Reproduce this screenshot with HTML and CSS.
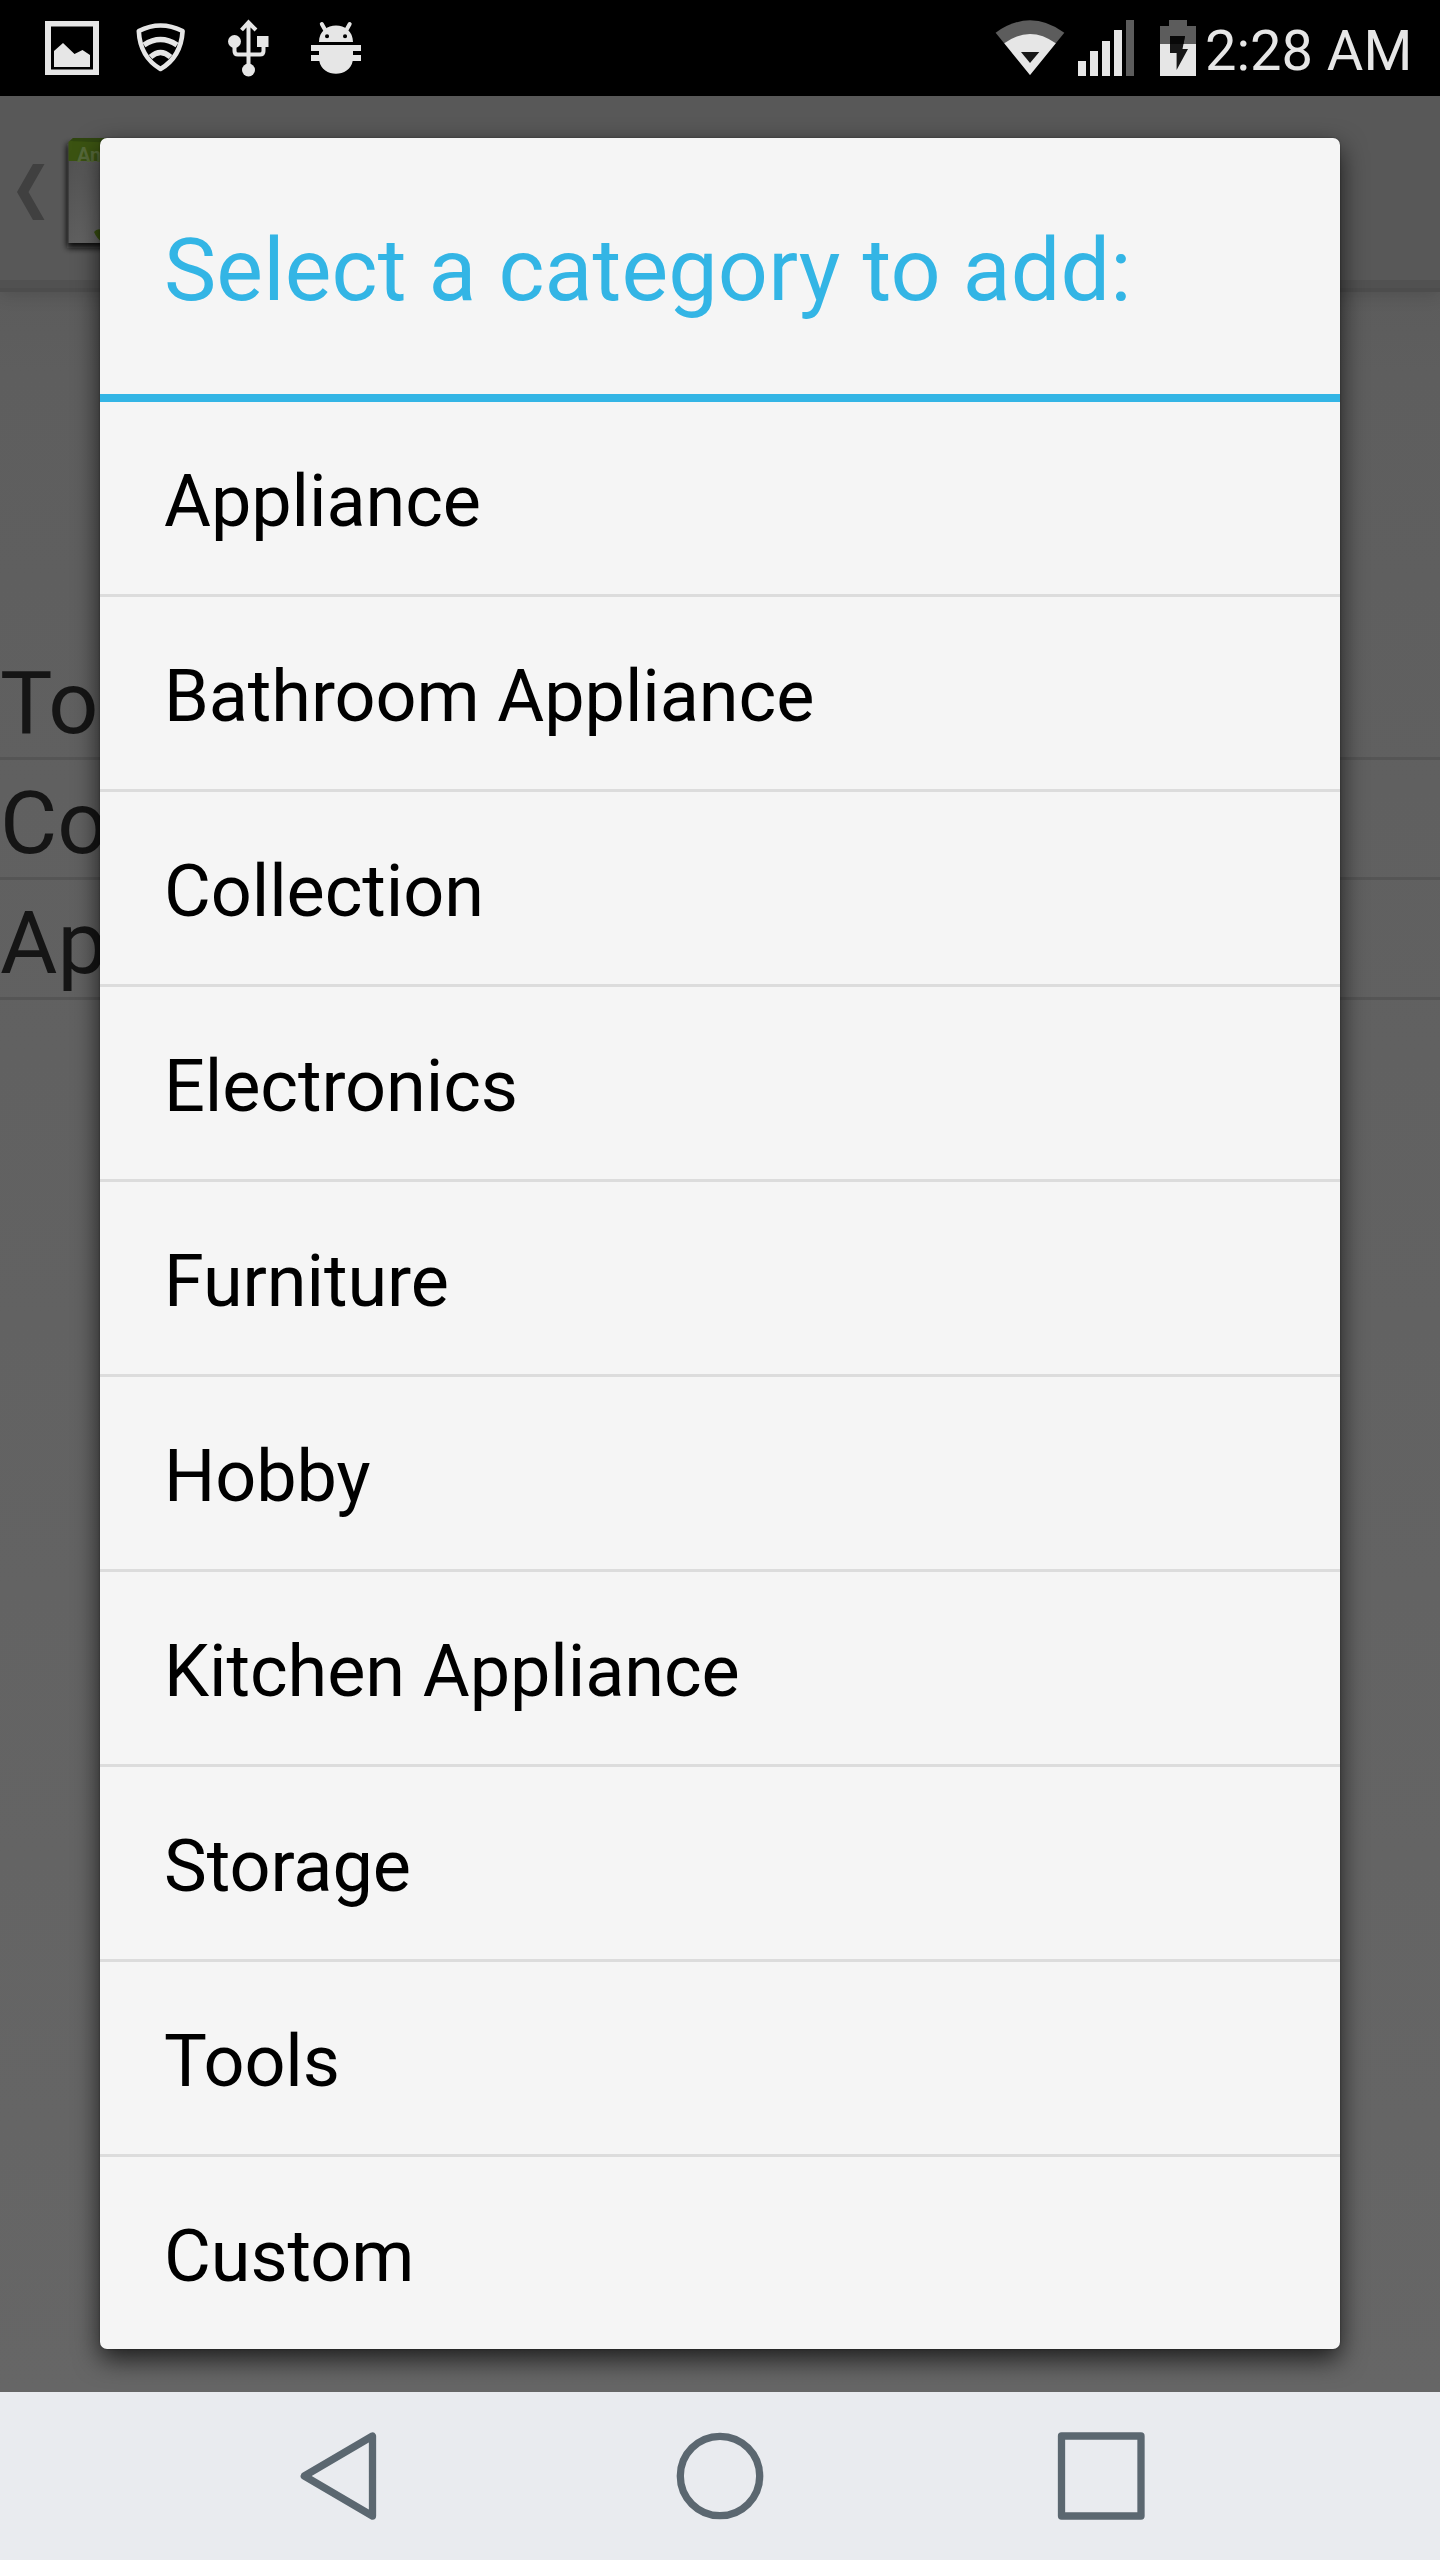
FILE: index.html
```html
<!DOCTYPE html>
<html lang="en">
<head>
<meta charset="utf-8">
<title>Select a category</title>
<link rel="stylesheet" href="styles.css">
</head>
<body>
<div class="device">
  <header class="status-bar">
    <svg class="status-left" viewBox="0 0 400 96" width="400" height="96">
      <path d="M45 21h54v54H45zM51 26.500v43h42v-43z" fill-rule="evenodd"/>
      <path d="M54 51l9-8 11.500 11 8-4 7.500 5v12H54z"/>
      <g class="stroke" stroke-linejoin="round">
        <path d="M138.800 31Q160.500 20 182.600 31Q181 57 160.500 69Q140 57 138.800 31z" stroke-width="4.600"/>
        <path d="M144 45Q160.500 34 177 45M150.500 57Q160.500 48 170.500 57" stroke-width="5.400"/>
      </g>
      <path class="stroke" d="M248.500 70V23M241.500 30l7-7.500 7.500 7.500M234.500 42v9q0 3.500 3.500 3.500h22q3.500 0 3.500-3.500v-7" stroke-width="4"/>
      <circle cx="234.500" cy="41.500" r="6.500"/>
      <path d="M257 36h11.500v11H257z"/>
      <circle cx="248.500" cy="70" r="6.500"/>
      <path fill-rule="evenodd" d="M319 42c0-22 34-22 34 0zM325 36.300a2 2 0 1 0 4.100 0a2 2 0 1 0-4.100 0M343 36.300a2 2 0 1 0 4.100 0a2 2 0 1 0-4.100 0"/>
      <path class="stroke" d="M321.800 24l4.500 8M349.700 24l-4.500 8" stroke-width="4" stroke-linecap="round"/>
      <path d="M311 45h50v6h-8v4h8v6h-8.300c-3 17-30.500 17-33.400 0H311v-6h8v-4h-8z"/>
    </svg>
    <svg class="status-right" viewBox="0 0 240 96" width="240" height="96">
      <path class="dim" d="M25.600 32.700Q60 8 94.300 32.700L60 75z"/>
      <path d="M34.300 43.300Q60 24.500 85.800 43.300L60 75z"/>
      <path d="M51 52h18.300L60 63z" fill="#171717"/>
      <path d="M108 61h8v15h-8zM120 51h8v25h-8zM132 41h8v35h-8zM144 30h8v46h-8z"/>
      <path class="dim" d="M156 20h8v56h-8zM190 26h9v-6h18v6h9v18h-36z"/>
      <path d="M190 44h36v32h-36z"/>
      <path fill="#171717" d="M200 36h15l-2.500 13h5.500L206.600 70V53H200z"/>
      <path fill="#080808" d="M200 36h15l-1.500 8H200z"/>
    </svg>
    <span class="clock">2:28 AM</span>
  </header>

  <main class="screen">
    <div class="action-bar">
      <svg class="app-icon" viewBox="0 0 120 184" width="120" height="184">
        <defs>
          <linearGradient id="paper" x2="1" y2=".6"><stop stop-color="#4e4e4e"/><stop offset="1" stop-color="#707070"/></linearGradient>
          <filter id="soft" x="-30%" y="-30%" width="160%" height="160%"><feGaussianBlur stdDeviation="3"/></filter>
        </defs>
        <path d="M33 68h11.500L28.500 96l16 28H33L17 96z" fill="#404040"/>
        <path d="M67 48h70v104H67z" fill="#0c0c0c" filter="url(#soft)"/>
        <path d="M68.500 46h52v101h-52z" fill="url(#paper)"/>
        <path d="M68.500 46l4-3.500H120V65H68.500z" fill="#3b5311"/>
        <path d="M70 45l3-3h47v5z" fill="#304610"/>
        <text x="77" y="66" class="icon-label">An</text>
        <path d="M94 136q3-4 8-2v12q-5-3-8-10" fill="#3b5311"/>
      </svg>
    </div>
    <ul class="background-list">
      <li>Tools</li>
      <li>Collection</li>
      <li>Appliance</li>
    </ul>
  </main>

  <section class="dialog" role="dialog" aria-labelledby="dialog-title">
    <h1 id="dialog-title">Select a category to add:</h1>
    <ul class="options">
      <li>Appliance</li>
      <li>Bathroom Appliance</li>
      <li>Collection</li>
      <li>Electronics</li>
      <li>Furniture</li>
      <li>Hobby</li>
      <li>Kitchen Appliance</li>
      <li>Storage</li>
      <li>Tools</li>
      <li>Custom</li>
    </ul>
  </section>

  <nav class="nav-bar">
    <svg viewBox="0 0 96 96" width="96" height="96"><path d="M13.300 48L81.500 8v80z"/></svg>
    <svg viewBox="0 0 96 96" width="96" height="96"><circle cx="48" cy="48" r="39.700"/></svg>
    <svg viewBox="0 0 96 96" width="96" height="96"><path d="M8.500 8h79.500v80H8.500z"/></svg>
  </nav>
</div>
</body>
</html>
```

FILE: styles.css
```css
* { box-sizing: border-box; }

body {
  margin: 0;
  font-family: Roboto, "Liberation Sans", sans-serif;
}

ul, h1 { margin: 0; padding: 0; list-style: none; font-weight: 400; }
svg { display: block; flex: none; }

.device {
  position: relative;
  display: flex;
  flex-direction: column;
  width: 1440px;
  height: 2560px;
  overflow: hidden;
}

.status-bar {
  display: flex;
  flex: none;
  height: 96px;
  background: #000;
  color: #e6e6e6;
  fill: #e6e6e6;
}
.status-right { margin-left: auto; margin-right: -5px; }
.status-bar .stroke { fill: none; stroke: #e6e6e6; }
.status-bar .dim { fill: #5c5c5c; }
.clock {
  width: 235px;
  font-size: 56px;
  line-height: 102px;
  white-space: nowrap;
}

.screen {
  flex: 1;
  overflow: hidden;
  background: linear-gradient(#575757, #5e5e5e 12%, #606060 30%, #666);
}
.action-bar {
  height: 196px;
  background: #585858;
  border-bottom: 4px solid #4d4d4d;
  box-shadow: inset 0 -8px #515151, 0 4px 16px rgba(0, 0, 0, .12);
}
.icon-label { font-size: 20px; font-weight: 700; fill: #56693a; }
.background-list {
  padding-top: 348px;
  color: #151515;
  font-size: 88px;
}
.background-list li {
  height: 120px;
  border-bottom: 3px solid #555;
  line-height: 125px;
}

.dialog {
  position: absolute;
  top: 138px;
  left: 100px;
  width: 1240px;
  height: 2211px;
  border-radius: 7px;
  background: #f5f5f5;
  box-shadow: 0 0 2px rgba(0, 0, 0, .4), 0 10px 26px rgba(0, 0, 0, .72);
}
.dialog h1 {
  height: 264px;
  padding: 0 64px;
  border-bottom: 8px solid #33b5e5;
  color: #33b5e5;
  font-size: 88px;
  line-height: 264px;
  letter-spacing: .12px;
  white-space: nowrap;
}
.options li {
  height: 195px;
  padding: 0 64px;
  border-bottom: 3px solid #dcdcdc;
  font-size: 72px;
  line-height: 200px;
  letter-spacing: -.08px;
  color: #000;
}
.options li:last-child { height: 192px; border-bottom: 0; }

.nav-bar {
  display: flex;
  flex: none;
  align-items: center;
  justify-content: center;
  gap: 285px;
  height: 168px;
  background: #e9ebef;
  fill: none;
  stroke: #5b6770;
  stroke-width: 7.3;
  stroke-linejoin: round;
}
```
